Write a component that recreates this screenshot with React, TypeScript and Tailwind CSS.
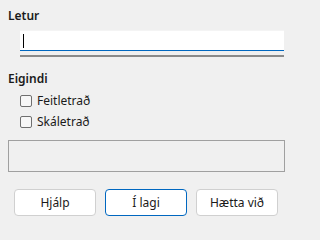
import React from "react";

function DialogButton({ label, primary }: { label: string; primary?: boolean }) {
  return (
    <button
      type="button"
      className={
        "h-[27px] w-[82px] rounded-[4px] bg-white text-[12px] text-[#1a1a1a] " +
        (primary ? "border border-[#0067c0]" : "border border-[#d0d0d0]")
      }
    >
      {label}
    </button>
  );
}

function CheckRow({ label }: { label: string }) {
  return (
    <label className="flex items-center gap-[5px] h-[21px]">
      <span className="block h-[12px] w-[12px] rounded-[2px] border border-[#6f6f6f] bg-[#f7f7f7]" />
      <span className="text-[12px] text-[#1a1a1a]">{label}</span>
    </label>
  );
}

export default function App() {
  return (
    <div
      className="w-full min-w-[293px] min-h-screen h-[231px] bg-[#f0f0f0] pt-[9px] px-[8px]"
      style={{ fontFamily: '"Noto Sans", "Open Sans", sans-serif' }}
    >
      <div className="w-[277px]">
        <div className="text-[12px] font-semibold text-[#1a1a1a] leading-[14px]">Letur</div>
        <div className="ml-[12px] mr-[1px] mt-[7px]">
          <div className="relative h-[21px] bg-white border-b border-[#0067c0] border-t border-t-[#f4f4f4]">
            <span className="absolute left-[3px] top-[3px] h-[14px] w-px bg-black" />
          </div>
          <div className="mt-[4px] h-[2px] bg-[#8a8a8a]" />
        </div>

        <div className="mt-[15px] text-[12px] font-semibold text-[#1a1a1a] leading-[14px]">Eigindi</div>
        <div className="ml-[12px] mt-[4px] flex flex-col">
          <CheckRow label="Feitletrað" />
          <CheckRow label="Skáletrað" />
        </div>

        <div className="mt-[8px] h-[32px] border border-[#a0a0a0]" />

        <div className="mt-[17px] flex gap-[9px] pl-[6px]">
          <DialogButton label="Hjálp" />
          <DialogButton label="Í lagi" primary />
          <DialogButton label="Hætta við" />
        </div>
      </div>
    </div>
  );
}
